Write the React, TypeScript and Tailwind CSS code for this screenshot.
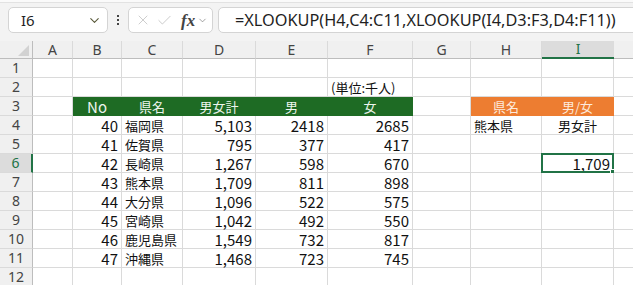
import React from 'react';
import { ChevronDown, X, Check } from 'lucide-react';

const colLetters = ['A', 'B', 'C', 'D', 'E', 'F', 'G', 'H', 'I', 'J'];

type Cell = { v: string; align?: 'l' | 'r' | 'c'; kind?: 'green' | 'orange' };

// rows 1..12, columns A..J
const rows: Record<number, Record<string, Cell>> = {
  2: { F: { v: '(単位:千人)', align: 'l' } },
  3: {
    B: { v: 'No', align: 'c', kind: 'green' },
    C: { v: '県名', align: 'c', kind: 'green' },
    D: { v: '男女計', align: 'c', kind: 'green' },
    E: { v: '男', align: 'c', kind: 'green' },
    F: { v: '女', align: 'c', kind: 'green' },
    H: { v: '県名', align: 'c', kind: 'orange' },
    I: { v: '男/女', align: 'c', kind: 'orange' },
  },
};

const data = [
  ['40', '福岡県', '5,103', '2418', '2685'],
  ['41', '佐賀県', '795', '377', '417'],
  ['42', '長崎県', '1,267', '598', '670'],
  ['43', '熊本県', '1,709', '811', '898'],
  ['44', '大分県', '1,096', '522', '575'],
  ['45', '宮崎県', '1,042', '492', '550'],
  ['46', '鹿児島県', '1,549', '732', '817'],
  ['47', '沖縄県', '1,468', '723', '745'],
];

data.forEach((d, i) => {
  const r = i + 4;
  rows[r] = {
    B: { v: d[0], align: 'r' },
    C: { v: d[1], align: 'l' },
    D: { v: d[2], align: 'r' },
    E: { v: d[3], align: 'r' },
    F: { v: d[4], align: 'r' },
  };
});
rows[4].H = { v: '熊本県', align: 'l' };
rows[4].I = { v: '男女計', align: 'c' };
rows[6].I = { v: '1,709', align: 'r' };

const isJp = (s: string) => /[^\x00-\x7f]/.test(s);

const GridCell: React.FC<{ cell?: Cell; selected?: boolean }> = ({ cell, selected }) => {
  let bg = 'bg-white border-[#dadada]';
  let color = 'text-[#111]';
  if (cell?.kind === 'green') {
    bg = 'bg-[#1e6b24] border-[#1e6b24]';
    color = 'text-[#eef5ee]';
  } else if (cell?.kind === 'orange') {
    bg = 'bg-[#ed7d31] border-[#ed7d31]';
    color = 'text-[#fdeadc]';
  }
  const align =
    cell?.align === 'r' ? 'justify-end pr-[3px]' : cell?.align === 'c' ? 'justify-center' : 'justify-start pl-[3px]';
  return (
    <div className={`relative flex items-center border-r border-b whitespace-nowrap ${bg} ${color} ${align}`}>
      {cell && (
        <span className={isJp(cell.v) ? 'text-[13px] leading-none' : 'text-[15px] leading-none'}>{cell.v}</span>
      )}
      {selected && (
        <>
          <div className="absolute -left-[1px] -top-[1px] -right-[1px] -bottom-[1px] border-2 border-[#217346]" />
          <div className="absolute -right-[4px] -bottom-[4px] w-[7px] h-[7px] bg-[#217346] border border-white" />
        </>
      )}
    </div>
  );
};

const App: React.FC = () => {
  return (
    <div className="w-[633px] h-[285px] overflow-hidden bg-white font-['Noto_Sans_CJK_JP',sans-serif]">
      {/* formula bar */}
      <div className="h-[41px] bg-[#f3f3f3] flex flex-col">
        <div className="h-[3px] bg-[#fafafa] border-b border-[#e2e2e2]" />
        <div className="flex items-center pt-[4px] font-['Noto_Sans',sans-serif]">
          <div className="shrink-0 ml-[8px] w-[100px] h-[26px] bg-white border border-[#d4d4d4] rounded-[5px] flex items-center justify-between pl-[12px] pr-[5px]">
            <span className="text-[15px] text-[#1f1f1f]">I6</span>
            <ChevronDown className="w-[15px] h-[15px] text-[#5a5a3a]" strokeWidth={1.75} />
          </div>
          <div className="shrink-0 ml-[9px] flex flex-col gap-[2px]">
            <div className="w-[2px] h-[2px] bg-[#444]" />
            <div className="w-[2px] h-[2px] bg-[#444]" />
            <div className="w-[2px] h-[2px] bg-[#444]" />
          </div>
          <div className="shrink-0 ml-[9px] w-[85px] h-[26px] bg-white border border-[#d4d4d4] rounded-[5px] flex items-center pl-[6px]">
            <X className="w-[16px] h-[16px] text-[#c4c4c4]" strokeWidth={1.25} />
            <Check className="ml-[5px] w-[17px] h-[17px] text-[#c4c4c4]" strokeWidth={1.25} />
            <span className="ml-[8px] text-[17px] italic font-semibold text-[#444] font-['Liberation_Serif',serif] leading-none">
              fx
            </span>
            <ChevronDown className="ml-[2px] w-[11px] h-[11px] text-[#777]" strokeWidth={1.5} />
          </div>
          <div className="shrink-0 ml-[5px] w-[430px] h-[26px] bg-white border border-[#d4d4d4] rounded-[5px] flex items-center pl-[16px]">
            <span className="text-[16.3px] text-[#1f1f1f] whitespace-nowrap">=XLOOKUP(H4,C4:C11,XLOOKUP(I4,D3:F3,D4:F11))</span>
          </div>
        </div>
      </div>

      {/* sheet */}
      <div className="grid grid-cols-[33px_40px_49px_61px_73px_72px_85px_58px_71px_72px_72px] grid-rows-[18px] auto-rows-[19px] w-[686px]">
        <div className="bg-[#f0f0f0] border-r border-b border-[#bdbdbd] flex items-end justify-end pr-[3px] pb-[2px]">
          <svg width="11" height="11" viewBox="0 0 11 11">
            <polygon points="11,0 11,11 0,11" fill="#d2d2d2" />
          </svg>
        </div>
        {colLetters.map((c) =>
          c === 'I' ? (
            <div
              key={c}
              className="bg-[#dcdcdc] border-b-2 border-[#217346] flex items-center justify-center text-[14px] text-[#217346] font-['Noto_Sans',sans-serif] leading-none"
            >
              {c}
            </div>
          ) : (
            <div
              key={c}
              className="bg-[#f0f0f0] border-r border-r-[#dadada] border-b border-b-[#bdbdbd] flex items-center justify-center text-[14px] text-[#444] font-['Noto_Sans',sans-serif] leading-none"
            >
              {c === 'J' ? '' : c}
            </div>
          )
        )}
        {Array.from({ length: 12 }, (_, i) => i + 1).map((r) => (
          <React.Fragment key={r}>
            {r === 6 ? (
              <div className="bg-[#dcdcdc] border-r-2 border-r-[#217346] border-b border-b-[#dadada] flex items-center justify-center text-[14px] text-[#217346] font-['Noto_Sans',sans-serif] leading-none">
                {r}
              </div>
            ) : (
              <div className="bg-[#f0f0f0] border-r border-r-[#bdbdbd] border-b border-b-[#dadada] flex items-center justify-center text-[14px] text-[#444] font-['Noto_Sans',sans-serif] leading-none">
                {r}
              </div>
            )}
            {colLetters.map((c) => (
              <GridCell key={c} cell={rows[r]?.[c]} selected={r === 6 && c === 'I'} />
            ))}
          </React.Fragment>
        ))}
      </div>
    </div>
  );
};

export default App;
